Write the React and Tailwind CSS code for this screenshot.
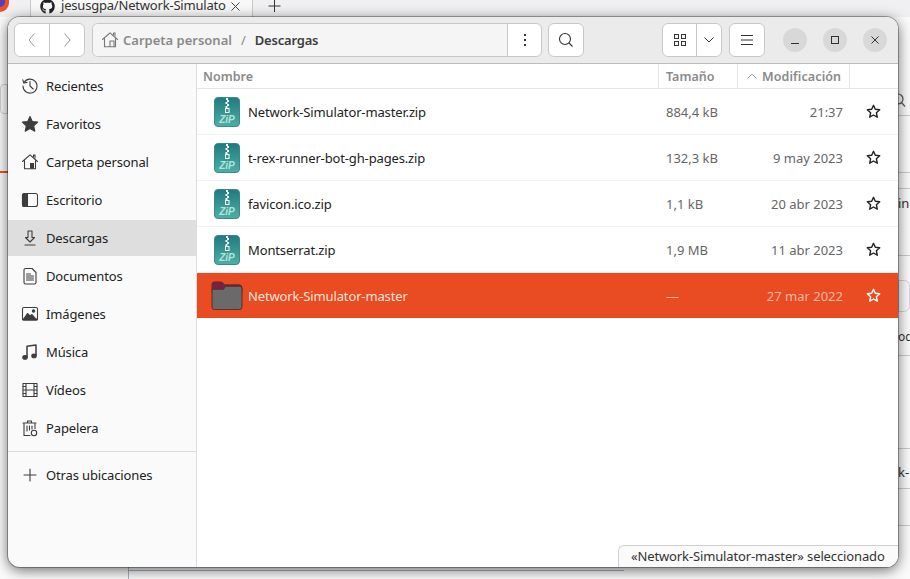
import { FaGithub } from "react-icons/fa";

const F = { fontFamily: '"Noto Sans","Open Sans",sans-serif' };

const I = ({ children, s = 18, c = "#3d3d3d" }) => (
  <svg width={s} height={s} viewBox="0 0 18 18" fill="none" stroke={c} strokeWidth="1.1" strokeLinecap="round" strokeLinejoin="round" className="shrink-0">{children}</svg>
);

const HomeIcon = ({ c, fill = true }) => (
  <I c={c}>
    <path d="M1.500 8.500 9 1.800l7.500 6.700" />
    <path d="M3.500 7.500v8.200h11V7.500" />
    <path d="M12.500 3.500V2H14v3" />
    {fill ? <rect x="9" y="10" width="4" height="5.700" fill={c} stroke="none" /> : <path d="M9 15.500V10h4v5.500" />}
  </I>
);

const sidebarIcons = {
  Recientes: <I><path d="M3 5.500A7 7 0 1 1 2 9" /><path d="M1.800 2.800 2.800 6l3.200-.6" /><path d="M9 4.500V9l3.200 3" /></I>,
  Favoritos: <I><path d="M9 1.500l2.300 5 5.400.6-4 3.700 1.100 5.400L9 13.500l-4.800 2.700 1.100-5.400-4-3.700 5.400-.6z" fill="#3d3d3d" /></I>,
  Carpeta: <HomeIcon c="#3d3d3d" />,
  Escritorio: <I><rect x="1.500" y="2.500" width="15" height="13" rx="2" /><path d="M3.500 2.500h3v13h-3a2 2 0 0 1-2-2v-9a2 2 0 0 1 2-2z" fill="#3d3d3d" /></I>,
  Descargas: <I><path d="M7 2h4v6.500h2.500L9 13 4.500 8.500H7z" /><path d="M4 16h10" /></I>,
  Documentos: <I><path d="M3 3a1.500 1.500 0 0 1 1.500-1.500H11L15 5.500v10a1.500 1.500 0 0 1-1.500 1.500h-9A1.500 1.500 0 0 1 3 15.500z" /><path d="M5.500 7h4M5.500 9h7M5.500 11h7M5.500 13h7" /></I>,
  Imagenes: <I><rect x="1.500" y="2.500" width="15" height="12.500" rx="1.500" /><path d="M3 13.500l3.500-5 2.500 2.500 2-1.500 3.500 4z" fill="#3d3d3d" /><circle cx="12.500" cy="6" r="1.200" fill="#3d3d3d" /><path d="M2 14.500h14" strokeWidth="2" /></I>,
  Musica: <I><path d="M6 14V3.200L15 2v10.500" strokeWidth="1.500" /><ellipse cx="4" cy="14.400" rx="2.200" ry="1.800" fill="#3d3d3d" /><ellipse cx="13" cy="12.900" rx="2.200" ry="1.800" fill="#3d3d3d" /></I>,
  Videos: <I><rect x="2" y="2.500" width="14" height="13" /><path d="M5 2.500v13M13 2.500v13M5 9h8M2 5.500h3M2 9h3M2 12.500h3M13 5.500h3M13 9h3M13 12.500h3" /></I>,
  Papelera: <I><path d="M2 4h13M6.500 4V2h4v2" /><path d="M3 4.500V16.500h6M14 4.500v5" /><path d="M6 7v5M8.500 7v4M11 7v3" /><circle cx="13" cy="14" r="2.700" /></I>,
};

const places = [
  ["Recientes", "Recientes"], ["Favoritos", "Favoritos"], ["Carpeta personal", "Carpeta"], ["Escritorio", "Escritorio"],
  ["Descargas", "Descargas", true], ["Documentos", "Documentos"], ["Imágenes", "Imagenes"], ["Música", "Musica"],
  ["Vídeos", "Videos"], ["Papelera", "Papelera"],
];

const ZipIcon = () => (
  <svg width="26" height="30" viewBox="0 0 26 30" className="shrink-0">
    <defs>
      <linearGradient id="zg" x1="0" y1="0" x2="0" y2="1">
        <stop offset="0" stopColor="#1f7a80" /><stop offset="1" stopColor="#4db0a6" />
      </linearGradient>
    </defs>
    <rect x="0.500" y="0.500" width="25" height="29" rx="3.500" fill="url(#zg)" stroke="#3a8a88" />
    <path d="M12 1h2v2h-2zM13 3h2v2h-2zM11.500 5h2v2h-2zM13 7h2v2h-2zM11.500 9h2v2h-2z" fill="#fff" />
    <rect x="11.500" y="11.500" width="3.500" height="4" fill="none" stroke="#fff" strokeWidth="1" />
    <text x="13" y="26" textAnchor="middle" fill="#b4e2dc" fontSize="10" fontWeight="700" fontStyle="italic" fontFamily="Liberation Sans, sans-serif">ZiP</text>
  </svg>
);

const FolderIcon = () => (
  <svg width="32" height="29" viewBox="0 0 33 30" className="shrink-0">
    <path d="M1 3.500A2.500 2.500 0 0 1 3.500 1H11l3 3h15a3 3 0 0 1 3 3v5H1z" fill="#7b2140" stroke="#5e2a32" />
    <path d="M1 8.500h12l2-3h14.500A2.500 2.500 0 0 1 32 8v19a2.500 2.500 0 0 1-2.500 2.500h-26A2.500 2.500 0 0 1 1 27z" fill="#6a6a6a" stroke="#53302c" />
  </svg>
);

const Star = ({ c = "#222" }) => (
  <svg width="15" height="15" viewBox="0 0 15 15" fill="none" stroke={c} strokeWidth="1.400" strokeLinejoin="round" className="shrink-0">
    <path d="M7.500 1.300l1.800 4 4.400.5-3.300 3 .9 4.400-3.800-2.200-3.800 2.200.9-4.400-3.300-3 4.400-.5z" />
  </svg>
);

const files = [
  ["Network-Simulator-master.zip", "884,4 kB", "21:37"],
  ["t-rex-runner-bot-gh-pages.zip", "132,3 kB", "9 may 2023"],
  ["favicon.ico.zip", "1,1 kB", "20 abr 2023"],
  ["Montserrat.zip", "1,9 MB", "11 abr 2023"],
];

const Row = ({ name, size, date, selected }) => (
  <div className={`flex items-center text-[13px] ${selected ? "h-[45px] bg-[#e94b22] text-[#fbe4da]" : "h-[46px] border-b border-[#f2f2f2] text-[#222]"}`}>
    <div className={`w-[51px] flex justify-end shrink-0 ${selected ? "pr-[5px]" : "pr-[8px]"}`}>{selected ? <FolderIcon /> : <ZipIcon />}</div>
    <div className="w-[410px] shrink-0 pt-[2px] tracking-[-0.14px]">{name}</div>
    <div className={`w-[94px] pl-[8px] shrink-0 pt-[2px] ${selected ? "text-[#f3b9a2]" : "text-[#666]"}`}>{size}</div>
    <div className={`w-[91px] text-right shrink-0 pt-[2px] ${selected ? "text-[#f3b9a2]" : "text-[#666]"}`}>{date}</div>
    <div className="ml-[24px] -translate-x-[1px]"><Star c={selected ? "#fff" : "#222"} /></div>
  </div>
);

const Btn = ({ className = "", children }) => (
  <div className={`h-[34px] bg-white border border-[#c8c8c8] rounded-[6px] flex items-center justify-center ${className}`}>{children}</div>
);

const WinBtn = ({ children }) => (
  <div className="w-[24px] h-[24px] rounded-full bg-[#d8d8d8] flex items-center justify-center">{children}</div>
);

const stripLines = [115, 172, 188, 255, 355, 448, 488, 525];

export default function App() {
  return (
    <div className="relative w-[910px] h-[579px] overflow-hidden bg-[#fbfbfc]" style={F}>
      {/* browser window behind, on the desktop */}
      <div className="absolute inset-x-0 top-0 h-[17px] bg-[#f0f0f2] flex">
        <div className="w-[9px] h-[12px] rounded-br-full bg-[#e8532f] overflow-hidden"><div className="w-[5px] h-[7px] bg-[#5a3fb0] rounded-br-full" /></div>
        <div className="ml-[21px] w-[223px] h-[17px] bg-[#f8f8f8] border-x border-[#c8c8cc] flex items-center pl-[9px] gap-[6px] text-[13px] tracking-[-0.2px] text-[#333] whitespace-nowrap overflow-hidden">
          <FaGithub className="w-[15px] h-[15px] text-[#222] shrink-0 -mt-[5px]" />
          <span className="w-[166px] -mt-[5px]">jesusgpa/Network-Simulato</span>
          <svg width="9" height="9" viewBox="0 0 9 9" stroke="#444" className="-mt-[5px] -ml-[2px] shrink-0"><path d="M.5.500l8 8M8.500.500l-8 8" /></svg>
        </div>
        <svg width="13" height="13" viewBox="0 0 13 13" stroke="#333" className="ml-[15px] shrink-0"><path d="M6.500 0v12M.500 6h12" /></svg>
      </div>
      <div className="absolute left-0 top-[171px] w-[8px] h-[2px] bg-[#e95420]" />
      <div className="absolute left-0 top-[84px] w-[8px] h-[30px] border border-[#d0d0d0] rounded-l" />
      {stripLines.map((y) => (
        <div key={y} className="absolute left-[898px] w-[12px] h-[1px] bg-[#c8ccd2]" style={{ top: y }} />
      ))}
      <div className="absolute left-[898px] top-[280px] w-[12px] h-[32px] border border-[#d4d4d4] rounded-r-[6px]" />
      <svg width="12" height="16" viewBox="0 0 12 16" fill="none" stroke="#555" strokeWidth="1.200" className="absolute left-[898px] top-[93px]"><circle cx="0" cy="6" r="5" /><path d="M3.500 9.500 7 13.500" /></svg>
      <div className="absolute left-[898px] top-[194px] text-[13px] text-[#333]">in</div>
      <div className="absolute left-[898px] top-[328px] text-[12px] leading-[18px] text-[#333]">od</div>
      <div className="absolute left-[898px] top-[463px] text-[13px] text-[#333]">k-</div>
      <div className="absolute left-[128px] top-[570px] w-[496px] h-[1px] bg-[#aab4c0]" />
      <div className="absolute left-[128px] top-[566px] w-[1px] h-[13px] bg-[#aab4c0]" />

      {/* file manager window */}
      <div className="absolute left-[8px] top-[17px] w-[890px] h-[550px] rounded-[12px] overflow-hidden flex flex-col bg-[#fafafa] shadow-[0_0_0_1px_rgba(0,0,0,0.3),0_3px_14px_rgba(0,0,0,0.6)]">
        <header className="h-[47px] shrink-0 bg-[#ebebeb] border-b border-[#bdbdbd] flex items-center pl-[6px]">
          <Btn className="w-[71px]">
            <div className="flex-1 flex justify-center border-r border-[#c8c8c8] h-full items-center">
              <svg width="10" height="16" viewBox="0 0 10 16" fill="none" stroke="#9a9a9a"><path d="M7.500 1.500 2 8l5.500 6.500" /></svg>
            </div>
            <div className="flex-1 flex justify-center items-center">
              <svg width="10" height="16" viewBox="0 0 10 16" fill="none" stroke="#9a9a9a"><path d="M2.500 1.500 8 8l-5.500 6.500" /></svg>
            </div>
          </Btn>
          <Btn className="w-[450px] ml-[7px] justify-start">
            <div className="flex-1 flex items-center pl-[8px] bg-[#f5f5f5] h-full rounded-l-[6px] text-[13px] font-semibold">
              <HomeIcon c="#777" fill={false} />
              <span className="ml-[4px] pt-[2px] text-[#8a8a8a]">Carpeta personal</span>
              <span className="ml-[9px] pt-[2px] text-[#8a8a8a] font-normal">/</span>
              <span className="ml-[9px] pt-[2px] text-[#3d3d3d] tracking-[-0.2px]">Descargas</span>
            </div>
            <div className="w-[34px] h-full border-l border-[#c8c8c8] flex flex-col items-center justify-center gap-[3px]">
              <i className="w-[2px] h-[2px] bg-[#333]" /><i className="w-[2px] h-[2px] bg-[#333]" /><i className="w-[2px] h-[2px] bg-[#333]" />
            </div>
          </Btn>
          <Btn className="w-[36px] ml-[6px]">
            <svg width="16" height="16" viewBox="0 0 16 16" fill="none" stroke="#333" strokeWidth="1.100"><circle cx="7" cy="7" r="5.500" /><path d="M11 11l3.500 3.500" /></svg>
          </Btn>
          <Btn className="w-[60px] ml-[78px]">
            <div className="flex-1 h-full flex items-center justify-center border-r border-[#c8c8c8]">
              <svg width="14" height="14" viewBox="0 0 14 14" fill="none" stroke="#333"><rect x="1.500" y="1.500" width="4" height="4" /><rect x="8.500" y="1.500" width="4" height="4" /><rect x="1.500" y="8.500" width="4" height="4" /><rect x="8.500" y="8.500" width="4" height="4" /></svg>
            </div>
            <div className="w-[24px] flex justify-center">
              <svg width="12" height="8" viewBox="0 0 12 8" fill="none" stroke="#333"><path d="M1.500 1.500 6 6l4.500-4.500" /></svg>
            </div>
          </Btn>
          <Btn className="w-[36px] ml-[7px]">
            <svg width="12" height="10" viewBox="0 0 12 10" stroke="#333"><path d="M0 .500h12M0 5h12M0 9.500h12" /></svg>
          </Btn>
          <div className="flex gap-[16px] ml-[18px]">
            <WinBtn><svg width="10" height="10" viewBox="0 0 10 10" stroke="#333"><path d="M1 8.500h8" /></svg></WinBtn>
            <WinBtn><svg width="10" height="10" viewBox="0 0 10 10" fill="none" stroke="#333"><rect x="1.500" y="1.500" width="7" height="7" /></svg></WinBtn>
            <WinBtn><svg width="10" height="10" viewBox="0 0 10 10" stroke="#333"><path d="M1.500 1.500l7 7M8.500 1.500l-7 7" /></svg></WinBtn>
          </div>
        </header>

        <div className="flex flex-1 min-h-0">
          <aside className="w-[189px] shrink-0 border-r border-[#dcdcdc] pt-[4px] text-[13px] text-[#222] tracking-[-0.14px]">
            <div className="flex flex-col gap-[2px] border-b border-[#dcdcdc] pb-[5px]">
              {places.map(([label, k, sel]) => (
                <div key={label} className={`h-[36px] flex items-center pl-[13px] gap-[7px] ${sel ? "bg-[#dedede]" : ""}`}>
                  {sidebarIcons[k]}<span className="pt-[2px]">{label}</span>
                </div>
              ))}
            </div>
            <div className="h-[46px] flex items-center pl-[13px] gap-[7px]">
              <I><path d="M9 3v12M3 9h12" /></I><span className="pt-[2px]">Otras ubicaciones</span>
            </div>
          </aside>

          <main className="relative flex-1 bg-white min-w-0">
            <div className="h-[25px] flex items-center border-b border-[#e6e6e6] text-[12.5px] font-semibold text-[#8a8a8a] bg-white">
              <div className="w-[462px] pl-[6px] pt-[2px] h-full flex items-center border-r border-[#e6e6e6]">Nombre</div>
              <div className="w-[79px] pl-[7px] pt-[2px] h-full flex items-center border-r border-[#e6e6e6]">Tamaño</div>
              <div className="w-[112px] pl-[9px] h-full flex items-center gap-[5px] border-r border-[#e6e6e6]">
                <svg width="10" height="6" viewBox="0 0 10 6" fill="none" stroke="#999"><path d="M.500 5.500 5 1l4.500 4.500" /></svg>
                <span className="pt-[2px] tracking-[0.1px]">Modificación</span>
              </div>
            </div>
            {files.map(([n, s, d]) => <Row key={n} name={n} size={s} date={d} />)}
            <Row name="Network-Simulator-master" size="—" date="27 mar 2022" selected />
            <div className="absolute right-0 bottom-0 w-[280px] h-[22px] bg-[#fafafa] border-t border-l border-[#d0d0d0] rounded-tl-[6px] flex items-center pl-[12px] text-[13px] tracking-[-0.13px] text-[#333] whitespace-nowrap">
              «Network-Simulator-master» seleccionado
            </div>
          </main>
        </div>
      </div>
    </div>
  );
}
